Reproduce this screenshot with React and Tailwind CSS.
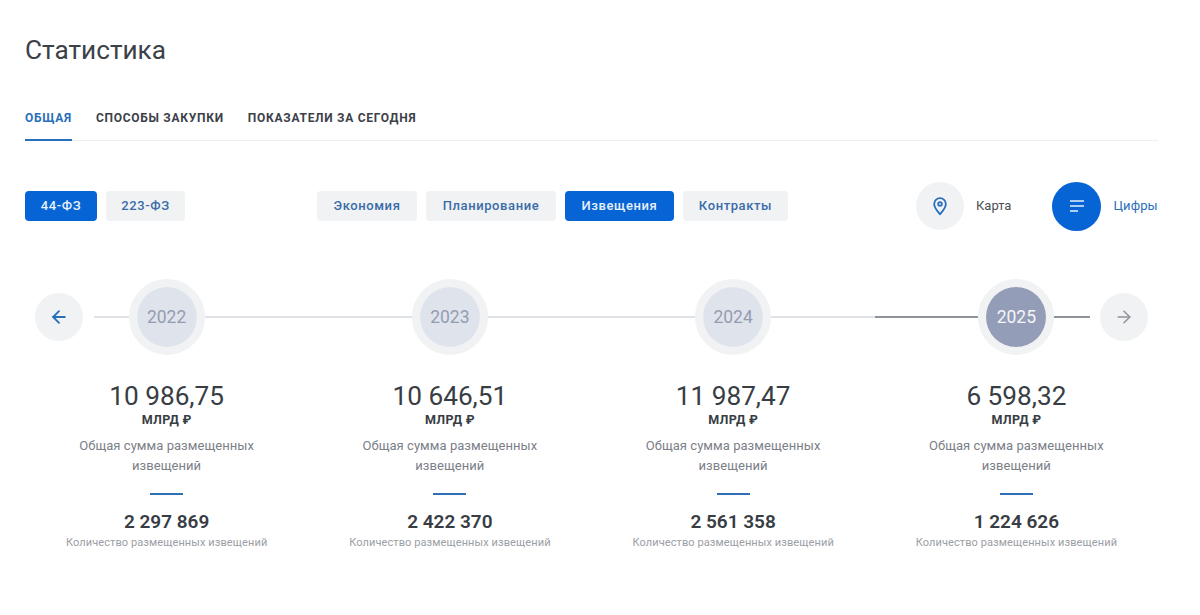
import { ArrowLeft, ArrowRight } from "lucide-react";

const years = [
  { year: "2022", sum: "10 986,75", count: "2 297 869" },
  { year: "2023", sum: "10 646,51", count: "2 422 370" },
  { year: "2024", sum: "11 987,47", count: "2 561 358" },
  { year: "2025", sum: "6 598,32", count: "1 224 626", active: true },
];

function Pill({ children, active, className = "" }) {
  return (
    <button
      className={`h-[30px] rounded-[4px] text-[13px] font-medium tracking-[0.6px] ${
        active ? "bg-[#0664d4] text-[#e8f0fb]" : "bg-[#f0f2f4] text-[#3a6ca8]"
      } ${className}`}
    >
      {children}
    </button>
  );
}

function YearColumn({ sum, count }) {
  return (
    <div className="flex flex-col items-center">
      <div className="mt-[26px] text-[26.2px] leading-[30px] text-[#383d44]">{sum}</div>
      <div className="mt-[2px] text-[12.5px] leading-[14px] font-bold tracking-[0.3px] text-[#383d44]">
        МЛРД ₽
      </div>
      <div className="mt-[9px] w-[190px] text-center text-[13px] leading-[20px] tracking-[0.05px] text-[#7b8088]">
        Общая сумма размещенных извещений
      </div>
      <div className="mt-[17px] h-[2px] w-[33px] bg-[#2f6fb5]" />
      <div className="mt-[16px] text-[19px] leading-[22px] font-semibold text-[#383d44]">{count}</div>
      <div className="mt-[2px] text-[11px] leading-[16px] tracking-[0.1px] text-[#9a9ea5]">
        Количество размещенных извещений
      </div>
    </div>
  );
}

export default function App() {
  return (
    <div className="h-[615px] w-[1200px] overflow-hidden bg-white pt-[33px] pr-[42px] pl-[25px] font-['Roboto',sans-serif]">
      <h1 className="text-[26.2px] leading-[34px] text-[#3c4148]">Статистика</h1>

      <div className="mt-[33px] flex h-[41px] gap-[24px] border-b border-[#eceef0] text-[12px] font-bold tracking-[0.72px] uppercase">
        <div className="-mb-px border-b-2 border-[#2a6fba] pt-[9px] text-[#2a6fba]">Общая</div>
        <div className="pt-[9px] text-[#3c4148]">Способы закупки</div>
        <div className="pt-[9px] text-[#3c4148]">Показатели за сегодня</div>
      </div>

      <div className="mt-[41px] flex h-[48px] items-center">
        <Pill active className="w-[72px]">44-ФЗ</Pill>
        <Pill className="ml-[9px] w-[79px]">223-ФЗ</Pill>
        <Pill className="ml-[132px] w-[100px]">Экономия</Pill>
        <Pill className="ml-[9px] w-[130px]">Планирование</Pill>
        <Pill active className="ml-[9px] w-[109px]">Извещения</Pill>
        <Pill className="ml-[9px] w-[105px]">Контракты</Pill>

        <div className="ml-[128px] flex h-[48px] w-[48px] items-center justify-center rounded-full bg-[#f0f2f4]">
          <svg width="20" height="20" viewBox="0 0 24 24" fill="none" stroke="#2a6fba" strokeWidth="2.2" strokeLinejoin="round">
            <path d="M12 22c-1-1.500-7-7.500-7-12.500a7 7 0 0 1 14 0C19 14.500 13 20.500 12 22z" />
            <circle cx="12" cy="9.500" r="2.200" />
          </svg>
        </div>
        <span className="ml-[12px] text-[13px] text-[#4a4f56]">Карта</span>

        <div className="ml-[41px] flex h-[49px] w-[49px] items-center justify-center rounded-full bg-[#0664d4]">
          <svg width="18" height="18" viewBox="0 0 18 18" fill="none" stroke="#e8f0fb" strokeWidth="1.700">
            <path d="M2 4h14M2 9h14M2 14h8" />
          </svg>
        </div>
        <span className="ml-[12px] text-[13px] tracking-[0.1px] text-[#2a6fba]">Цифры</span>
      </div>

      <div className="relative mt-[49px] grid h-[76px] grid-cols-4">
        <div className="absolute top-[37px] left-[69px] h-[2px] w-[781px] bg-[#dfe2e6]" />
        <div className="absolute top-[37px] left-[850px] h-[2px] w-[215px] bg-[#8f949b]" />
        <div className="absolute top-[14px] left-[10px] flex h-[48px] w-[48px] items-center justify-center rounded-full bg-[#f0f2f4]">
          <ArrowLeft size={20} strokeWidth={2.200} className="text-[#2a6fba]" />
        </div>
        <div className="absolute top-[14px] left-[1075px] flex h-[48px] w-[48px] items-center justify-center rounded-full bg-[#f0f2f4]">
          <ArrowRight size={20} strokeWidth={1.800} className="text-[#8f949b]" />
        </div>
        {years.map((y) => (
          <div key={y.year} className="relative flex items-center justify-center">
            <div className="flex h-[76px] w-[76px] items-center justify-center rounded-full border-[8px] border-[#f0f2f4] bg-white bg-clip-padding">
              <div
                className={`flex h-[60px] w-[60px] items-center justify-center rounded-full text-[17.5px] ${
                  y.active ? "bg-[#949db8] text-[#f4f5f8]" : "bg-[#dfe3ec] text-[#949db0]"
                }`}
              >
                {y.year}
              </div>
            </div>
          </div>
        ))}
      </div>

      <div className="grid grid-cols-4">
        {years.map((y) => (
          <YearColumn key={y.year} sum={y.sum} count={y.count} />
        ))}
      </div>
    </div>
  );
}
